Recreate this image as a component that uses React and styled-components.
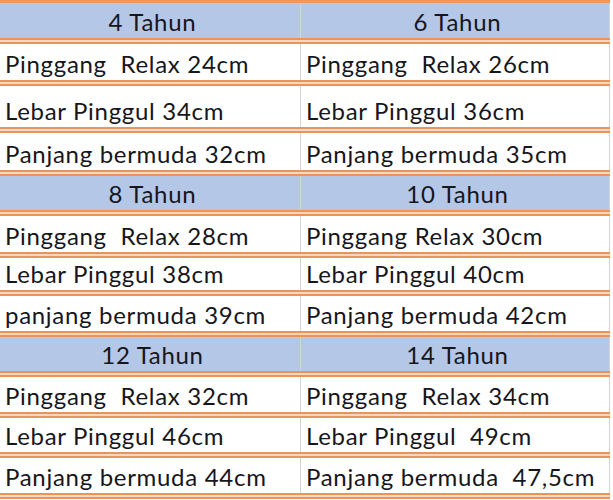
import React from "react";
import styled, { createGlobalStyle, css } from "styled-components";

const GlobalStyle = createGlobalStyle`
  html, body {
    margin: 0;
    padding: 0;
    background: #ffffff;
  }
  body {
    font-family: Lato, "Open Sans", sans-serif;
  }
`;

const sizes = [
  {
    title: ["4 Tahun", "6 Tahun"],
    headH: 35,
    rows: [
      { h: 36, cells: ["Pinggang  Relax 24cm", "Pinggang  Relax 26cm"] },
      { h: 41, cells: ["Lebar Pinggul 34cm", "Lebar Pinggul 36cm"] },
      { h: 37, cells: ["Panjang bermuda 32cm", "Panjang bermuda 35cm"] },
    ],
  },
  {
    title: ["8 Tahun", "10 Tahun"],
    headH: 34,
    rows: [
      { h: 36, cells: ["Pinggang  Relax 28cm", "Pinggang Relax 30cm"] },
      { h: 32, cells: ["Lebar Pinggul 38cm", "Lebar Pinggul 40cm"] },
      { h: 35, cells: ["panjang bermuda 39cm", "Panjang bermuda 42cm"] },
    ],
  },
  {
    title: ["12 Tahun", "14 Tahun"],
    headH: 34,
    rows: [
      { h: 35, cells: ["Pinggang  Relax 32cm", "Pinggang  Relax 34cm"] },
      { h: 34, cells: ["Lebar Pinggul 46cm", "Lebar Pinggul  49cm"] },
      { h: 35, cells: ["Panjang bermuda 44cm", "Panjang bermuda  47,5cm"] },
    ],
  },
];

const App = () => {
  return (
    <>
      <GlobalStyle />
      <Table>
        {sizes.map((block, i) => (
          <React.Fragment key={i}>
            <Row $h={block.headH}>
              {block.title.map((t) => (
                <Cell key={t} $header>
                  {t}
                </Cell>
              ))}
            </Row>
            {block.rows.map((row, j) => (
              <Row key={j} $h={row.h}>
                {row.cells.map((c) => (
                  <Cell key={c}>{c}</Cell>
                ))}
              </Row>
            ))}
          </React.Fragment>
        ))}
      </Table>
    </>
  );
};

export default App;

const Table = styled("div")(
  () => css`
    width: 610px;
    display: flex;
    flex-direction: column;
    border-top: 3px solid #ec9860;
  `
);

// the row background only shows in the gap of the double border
const Row = styled("div")(
  ({ $h }) => css`
    display: grid;
    grid-template-columns: 301px 309px;
    height: ${$h}px;
    box-sizing: content-box;
    background: #f8d6bf;
    border-bottom: 6px double #ea945a;
  `
);

const Cell = styled("div")(
  ({ $header }) => css`
    display: flex;
    align-items: flex-end;
    justify-content: ${$header ? "center" : "flex-start"};
    padding: 0 0 1px 5px;
    box-sizing: border-box;
    background: ${$header ? "#b4c7e7" : "#ffffff"};
    border-right: 1px solid #d4d4d4;
    font-size: 24px;
    line-height: 1.2;
    letter-spacing: 0.7px;
    color: #16161c;
    white-space: pre;
  `
);
